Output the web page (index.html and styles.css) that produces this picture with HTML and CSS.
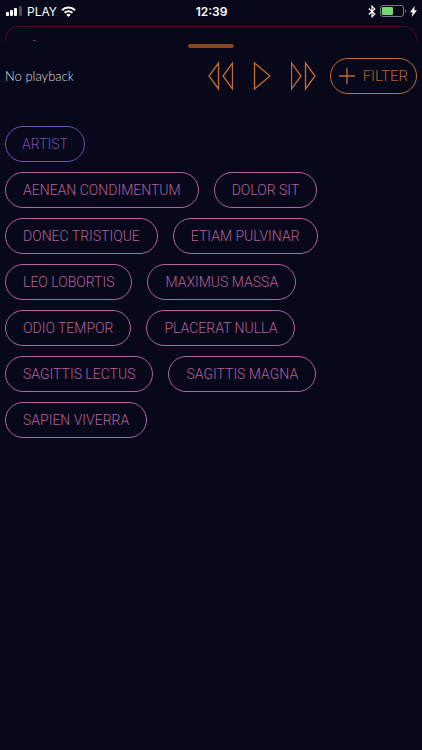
FILE: index.html
```html
<!DOCTYPE html>
<html lang="en">
<head>
    <meta charset="UTF-8">
    <meta name="viewport" content="width=device-width, initial-scale=1.0">
    <title>Player</title>
    <link rel="stylesheet" href="styles.css">
</head>
<body>
    <header class="status-bar">
        <div class="status-side">
            <svg class="signal" width="17" height="10" viewBox="0 0 17 10">
                <rect x="0" y="6" width="3" height="4" rx="1" fill="#fff"/>
                <rect x="4" y="4" width="3" height="6" rx="1" fill="#fff"/>
                <rect x="8" y="2" width="3" height="8" rx="1" fill="#fff"/>
                <rect x="13" y="0" width="3" height="10" rx="1" fill="#4b4b59"/>
            </svg>
            <span class="carrier">PLAY</span>
            <svg class="wifi" width="15" height="11" viewBox="0 0 15 11" fill="none" stroke="#fff" stroke-width="2">
                <path d="M1 4.2a9.3 9.3 0 0 1 13 0"/>
                <path d="M3.6 6.8a5.6 5.6 0 0 1 7.8 0"/>
                <path d="M7.5 11L5.3 8.8a3.1 3.1 0 0 1 4.4 0z" fill="#fff" stroke="none"/>
            </svg>
        </div>
        <time class="clock">12:39</time>
        <div class="status-side status-right">
            <svg width="8" height="13" viewBox="0 0 8 13" fill="none" stroke="#fff" stroke-width="1.2">
                <path d="M.8 3.5l6 5.6L4 11.8V1.2l2.8 2.7-6 5.6"/>
            </svg>
            <svg width="26" height="12" viewBox="0 0 26 12">
                <rect x=".5" y=".5" width="23" height="11" rx="2.5" fill="none" stroke="#777783"/>
                <rect x="2" y="2" width="11" height="8" rx="1" fill="#76d672"/>
                <path d="M25 4c1.300 .6 1.300 3.400 0 4z" fill="#777783"/>
            </svg>
            <svg width="7" height="11" viewBox="0 0 7 11">
                <path d="M4.600 0L0 6.300h2.600L1.800 11 7 4.300H4.200z" fill="#fff"/>
            </svg>
        </div>
    </header>

    <div class="card-peek"><span class="card-mark"></span></div>

    <main class="sheet">
        <div class="handle"></div>

        <div class="player">
            <span class="track">No playback</span>
            <div class="controls">
                <button type="button" class="control" aria-label="Previous">
                    <svg width="25" height="30" viewBox="0 0 25 30"><path d="M10.500 2v26L1 15zM24.500 2v26L15 15z"/></svg>
                </button>
                <button type="button" class="control" aria-label="Play">
                    <svg width="18" height="30" viewBox="0 0 18 30"><path d="M1.500 2v26L17 15z"/></svg>
                </button>
                <button type="button" class="control" aria-label="Next">
                    <svg width="25" height="30" viewBox="0 0 25 30"><path d="M.5 2v26L10 15zM14.500 2v26L24 15z"/></svg>
                </button>
            </div>
            <button type="button" class="pill pill-filter">
                <svg width="16" height="16" viewBox="0 0 16 16"><path d="M8 0v16M0 8h16"/></svg>
                Filter
            </button>
        </div>

        <div class="tags">
            <button type="button" class="pill pill-group">Artist</button>
        </div>
        <div class="tags">
            <button type="button" class="pill">Aenean Condimentum</button>
            <button type="button" class="pill">Dolor Sit</button>
            <button type="button" class="pill">Donec Tristique</button>
            <button type="button" class="pill">Etiam Pulvinar</button>
            <button type="button" class="pill">Leo Lobortis</button>
            <button type="button" class="pill">Maximus Massa</button>
            <button type="button" class="pill">Odio Tempor</button>
            <button type="button" class="pill">Placerat Nulla</button>
            <button type="button" class="pill">Sagittis Lectus</button>
            <button type="button" class="pill">Sagittis Magna</button>
            <button type="button" class="pill">Sapien Viverra</button>
        </div>
    </main>
</body>
</html>
```
FILE: styles.css
```css
* {
    box-sizing: border-box;
}

body {
    margin: 0;
    min-height: 100vh;
    background-color: #070819;
    color: #fff;
    font-family: Lato, sans-serif;
}

.status-bar {
    display: flex;
    align-items: center;
    height: 22px;
    padding: 0 5px 0 6px;
    margin-bottom: 4px;
    font-family: Inter, sans-serif;
    font-size: 12px;
}

.status-side {
    display: flex;
    flex: 1;
    align-items: center;
    gap: 4px;
}

.status-right {
    justify-content: flex-end;
}

.clock {
    font-size: 12px;
    font-weight: 600;
}

.card-peek {
    height: 15px;
    margin: 0 5px;
    padding: 13px 27px 0;
    border: 1px solid #4a0d22;
    border-bottom: none;
    border-radius: 14px 14px 0 0;
}

.card-mark {
    display: block;
    width: 3px;
    height: 1px;
    background-color: #a52c3c;
}

.sheet {
    padding: 3px 5px 20px;
}

.handle {
    width: 46px;
    height: 4px;
    margin: 0 auto 10px;
    border-radius: 2px;
    background-color: #87461f;
}

.player {
    display: flex;
    align-items: center;
    margin-bottom: 32px;
}

.track {
    flex: 1;
    font-size: 13px;
    font-weight: 300;
    color: #dcdce2;
}

.controls {
    display: flex;
    gap: 20px;
    margin-right: 14px;
}

.control {
    display: flex;
    padding: 0;
    border: none;
    background: none;
    cursor: pointer;
}

.control svg,
.pill svg {
    fill: none;
    stroke: #c56c30;
    stroke-width: 1.3;
}

.tags {
    display: flex;
    flex-wrap: wrap;
    gap: 10px 15px;
    margin-bottom: 10px;
}

.pill {
    display: flex;
    align-items: center;
    height: 36px;
    padding: 0 17px;
    border: 1px solid #b8619f;
    border-radius: 18px;
    background: none;
    color: #b8619f;
    font-family: Roboto, sans-serif;
    font-size: 14px;
    font-weight: 300;
    text-transform: uppercase;
    cursor: pointer;
}

.pill-group {
    padding: 0 16px;
    border-color: #7650b8;
    color: #7650b8;
}

.pill-filter {
    gap: 8px;
    padding: 0 8px;
    border-color: #c56c30;
    color: #b5652f;
    font-size: 15px;
}
```
